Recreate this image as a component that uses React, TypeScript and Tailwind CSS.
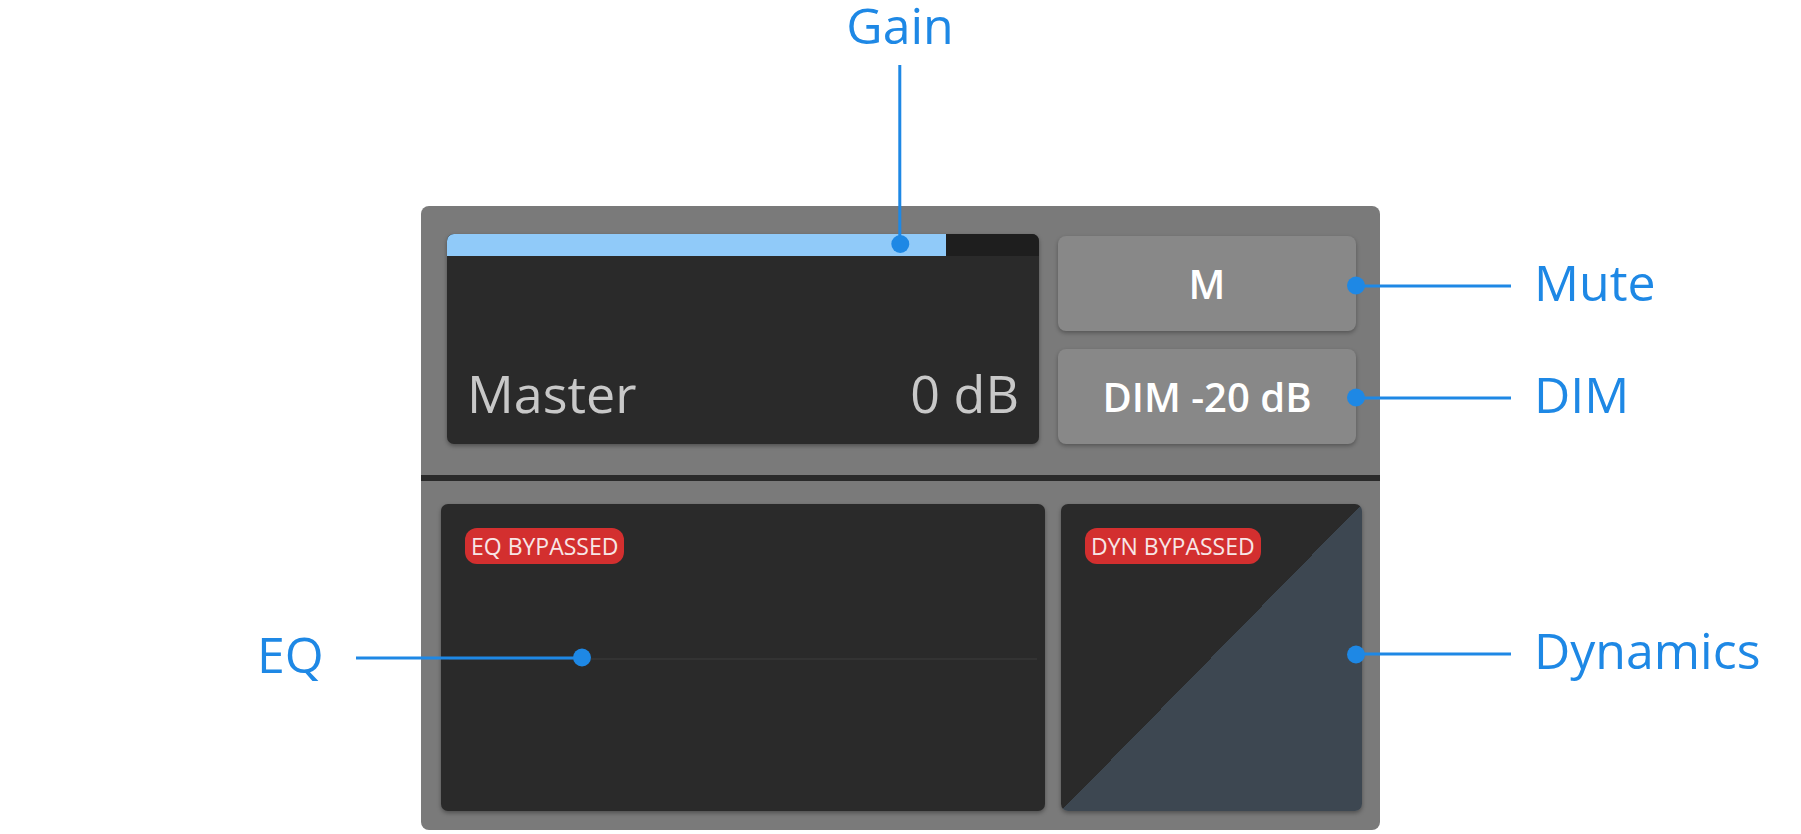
import React from "react";

const font = { fontFamily: '"Open Sans", "Noto Sans", sans-serif' };

function Dot() {
  return <div className="w-[18px] h-[18px] shrink-0 rounded-full bg-[#1e88e5]" />;
}

function RightCallout({ top, label }: { top: number; label: string }) {
  return (
    <div
      className="absolute left-[1347px] flex flex-row items-center -translate-y-1/2"
      style={{ top }}
    >
      <Dot />
      <div className="w-[147px] h-[3px] -ml-[1px] bg-[#1e88e5]" />
      <div className="ml-[23px] mb-[9px] text-[50px] leading-none text-[#1e88e5] whitespace-nowrap">
        {label}
      </div>
    </div>
  );
}

export default function App() {
  return (
    <div
      className="relative w-[1801px] h-[834px] bg-white overflow-hidden pt-[206px] pl-[421px]"
      style={font}
    >
      {/* Panel */}
      <div className="w-[959px] h-[624px] bg-[#7a7a7a] rounded-[8px] flex flex-col overflow-hidden">
        {/* Top section */}
        <div className="flex flex-row gap-[19px] pt-[28px] pb-[31px] pl-[26px] pr-[24px] h-[269px]">
          <div className="w-[592px] rounded-[7px] bg-[#2a2a2a] overflow-hidden flex flex-col shadow-[0_2px_4px_rgba(0,0,0,0.35)]">
            <div className="h-[22px] bg-[#1e1e1e] flex">
              <div className="w-[84.3%] h-full bg-[#90caf9]" />
            </div>
            <div className="flex-1 flex items-end justify-between px-[20px] pb-[25px] text-[52px] leading-none text-[#c8c8c8]">
              <span>Master</span>
              <span>0 dB</span>
            </div>
          </div>
          <div className="flex-1 flex flex-col gap-[18px] pt-[2px]">
            <div className="flex-1 rounded-[8px] bg-[#888888] flex items-center justify-center text-white font-semibold text-[40px] leading-none shadow-[0_2px_4px_rgba(0,0,0,0.3)]">
              M
            </div>
            <div className="flex-1 rounded-[8px] bg-[#888888] flex items-center justify-center text-white font-semibold text-[40px] leading-none shadow-[0_2px_4px_rgba(0,0,0,0.3)]">
              DIM -20 dB
            </div>
          </div>
        </div>
        {/* Separator */}
        <div className="h-[6px] bg-[#2a2a2a]" />
        {/* Bottom section */}
        <div className="flex-1 flex flex-row gap-[16px] pt-[23px] pb-[19px] pl-[20px] pr-[18px]">
          <div className="relative w-[604px] rounded-[7px] bg-[#2a2a2a] p-[24px] shadow-[0_2px_4px_rgba(0,0,0,0.35)]">
            <div className="absolute left-[8px] right-[8px] top-1/2 h-[2px] bg-[#333333]" />
            <div className="relative inline-flex items-center h-[36px] px-[6px] rounded-[12px] bg-[#d32f2f] text-[#f7e6e6] text-[23px] leading-none">
              EQ BYPASSED
            </div>
          </div>
          <div className="flex-1 rounded-[7px] p-[24px] bg-[linear-gradient(to_top_left,#3d4751_50%,#2a2a2a_50%)] shadow-[0_2px_4px_rgba(0,0,0,0.35)]">
            <div className="inline-flex items-center h-[36px] px-[6px] rounded-[12px] bg-[#d32f2f] text-[#f7e6e6] text-[23px] leading-none">
              DYN BYPASSED
            </div>
          </div>
        </div>
      </div>

      {/* Gain callout */}
      <div className="absolute left-[900px] top-0 -translate-x-1/2 flex flex-col items-center">
        <div className="text-[50px] leading-none text-[#1e88e5]">Gain</div>
        <div className="mt-[15px] w-[3px] h-[171px] bg-[#1e88e5]" />
        <div className="-mt-[1px]">
          <Dot />
        </div>
      </div>

      <RightCallout top={285.5} label="Mute" />
      <RightCallout top={397.5} label="DIM" />
      <RightCallout top={654} label="Dynamics" />

      {/* EQ callout */}
      <div className="absolute left-[254px] top-[657.5px] -translate-y-1/2 flex flex-row items-center">
        <div className="w-[102px] pl-[3px] mb-[9px] text-[50px] leading-none text-[#1e88e5]">EQ</div>
        <div className="w-[218px] h-[3px] -mr-[1px] bg-[#1e88e5]" />
        <Dot />
      </div>
    </div>
  );
}
